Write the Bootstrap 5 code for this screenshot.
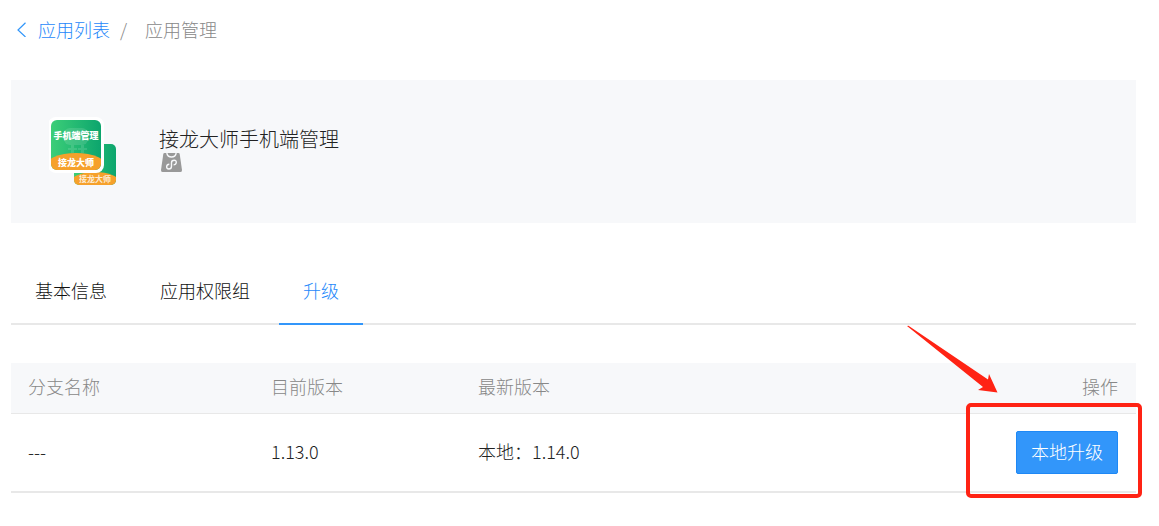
<!DOCTYPE html>
<html lang="zh-CN">
<head>
<meta charset="utf-8">
<meta name="viewport" content="width=device-width, initial-scale=1">
<title>应用管理</title>
<link href="https://cdn.jsdelivr.net/npm/bootstrap@5.3.0/dist/css/bootstrap.min.css" rel="stylesheet">
<style>
  body { font-family: "Noto Sans CJK SC", sans-serif; font-size: 18px; line-height: 26px; font-weight: 300; color: #222; }
  .page { padding: 16px 23px 32px 11px; }
  .crumbs { gap: 10px; color: #888; margin-bottom: 38px; }
  .crumbs a { color: #1e88fa; gap: 12px; padding-left: 5px; }
  .panel { background: #f7f8fa; padding: 36px 38px 35px; gap: 40px; }
  .app-title { font-size: 20px; line-height: 28px; font-weight: 300; margin: 9px 0 0; }
  .app-tabs { gap: 5px; margin-top: 46px; border-bottom: 2px solid #e8e8e8; }
  .app-tabs .nav-link { color: #111; padding: 8px 24px 20px; margin-bottom: -2px; border-radius: 0; border-bottom: 2px solid transparent; }
  .app-tabs .nav-link.active { color: #1e88fa; background: none; border-color: #3296fa; }
  .versions { margin-top: 38px; }
  .versions table { --bs-table-color: #222; table-layout: fixed; border-bottom: 2px solid #e8e8e8; }
  .versions th { background: #f7f8fa; color: #888; font-weight: 300; padding: 10px 18px 14px 17px; border-bottom: 1px solid #e8e8e8; }
  .versions td { padding: 15px 18px 19px 17px; border: 0; }
  .versions td.action { padding: 17px 18px 17px 17px; }
  .col-name { width: 21.6%; }
  .col-now { width: 18.4%; }
  .btn-upgrade { --bs-btn-font-size: 18px; --bs-btn-line-height: 25px; --bs-btn-font-weight: 300; --bs-btn-padding-x: 14px; --bs-btn-border-radius: 2px; --bs-btn-color: #fff; --bs-btn-bg: #3296fa; --bs-btn-border-color: #1e88f5; --bs-btn-hover-color: #fff; --bs-btn-hover-bg: #1e88f5; padding-top: 7px; padding-bottom: 9px; }
  .callout-box { right: -6px; bottom: -5px; width: 176px; height: 95px; border: 4px solid #ff2314; border-radius: 5px; pointer-events: none; }
  .callout-arrow { right: 138px; top: -38px; pointer-events: none; }
</style>
</head>
<body>
<main class="page">
  <nav aria-label="breadcrumb">
    <div class="crumbs d-flex align-items-center">
      <a class="d-flex align-items-center text-decoration-none" href="#">
        <svg width="10" height="16" viewBox="0 0 10 16" fill="none" stroke="#3296fa" stroke-width="1.2" aria-hidden="true"><path d="M9.500 1.800 2 9l7.500 7"/></svg>
        应用列表
      </a>
      <span>/</span>
      <span class="ms-2" aria-current="page">应用管理</span>
    </div>
  </nav>

  <section class="panel d-flex align-items-start">
    <svg width="70" height="72" viewBox="0 0 70 72" role="img" aria-label="接龙大师" font-family="Noto Sans CJK SC, sans-serif" fill="#fff">
      <defs>
        <linearGradient id="green"><stop stop-color="#3cce78"/><stop offset="1" stop-color="#0ca56d"/></linearGradient>
        <clipPath id="front"><rect x="2" y="4" width="50" height="50" rx="6"/></clipPath>
        <clipPath id="back"><rect x="25" y="28" width="42" height="41" rx="5"/></clipPath>
      </defs>
      <g clip-path="url(#back)">
        <path fill="url(#green)" d="M25 28h42v41H25z"/>
        <path d="M50 35q5 0 5 5v6q0 5-5 6z"/>
        <ellipse cx="46" cy="67" rx="25" ry="11" fill="#f6a12b"/>
      </g>
      <text x="46" y="66" font-size="8" font-weight="700" text-anchor="middle" opacity=".8">接龙大师</text>
      <rect x="-1" y="1" width="56" height="56" rx="8"/>
      <g clip-path="url(#front)">
        <path fill="url(#green)" d="M2 4h50v50H2z"/>
        <g opacity=".12"><rect x="15" y="12" width="24" height="17" rx="6"/><path d="M22 29h3v3h3v2h-3v3h-3v-3h-3v-2h3zM32 29h3v3h3v2h-3v3h-3v-3h-3v-2h3z"/></g>
        <ellipse cx="27" cy="51" rx="31" ry="14" fill="#f6a12b"/>
      </g>
      <text x="27" y="23" font-size="9" font-weight="900" text-anchor="middle">手机端管理</text>
      <text x="27" y="50" font-size="9" font-weight="900" text-anchor="middle">接龙大师</text>
    </svg>
    <div>
      <h1 class="app-title">接龙大师手机端管理</h1>
      <svg class="d-block" width="24" height="19" viewBox="-2 0 24 19" fill="none" stroke="#f7f8fa" stroke-width="1.400" role="img" aria-label="小程序">
        <path fill="#999" stroke="none" d="M3.500 0h14q1 0 1.200 1L21 17q.2 2-1.500 2h-18Q-.2 19 0 17L2.300 1q.2-1 1.200-1z"/>
        <path d="M5.800 0q.8 4 4.700 4t4.700-4"/>
        <path d="M8.300 11.200C5 11.300 4.700 16 7.800 16q2.700 0 2.700-2.800V9.800q0-2.600 2.700-2.600c3.100 0 2.600 4.500-.6 4.700"/>
      </svg>
    </div>
  </section>

  <ul class="nav app-tabs">
    <li class="nav-item"><a class="nav-link" href="#">基本信息</a></li>
    <li class="nav-item"><a class="nav-link" href="#">应用权限组</a></li>
    <li class="nav-item"><a class="nav-link active" aria-current="page" href="#">升级</a></li>
  </ul>

  <div class="versions position-relative">
    <table class="table align-middle mb-0">
      <thead>
        <tr><th class="col-name" scope="col">分支名称</th><th class="col-now" scope="col">目前版本</th><th scope="col">最新版本</th><th class="text-end" scope="col">操作</th></tr>
      </thead>
      <tbody>
        <tr><td>---</td><td>1.13.0</td><td>本地：1.14.0</td><td class="action text-end"><button type="button" class="btn btn-upgrade">本地升级</button></td></tr>
      </tbody>
    </table>
    <svg class="callout-arrow position-absolute" width="92" height="70" viewBox="0 0 92 70" fill="#ff2314" aria-hidden="true"><path d="M1 1 2.500.8 82 54.500 83 49 91.500 67.500 72 65l5-3z"/></svg>
    <div class="callout-box position-absolute"></div>
  </div>
</main>
<script src="https://cdn.jsdelivr.net/npm/bootstrap@5.3.0/dist/js/bootstrap.bundle.min.js"></script>
</body>
</html>
